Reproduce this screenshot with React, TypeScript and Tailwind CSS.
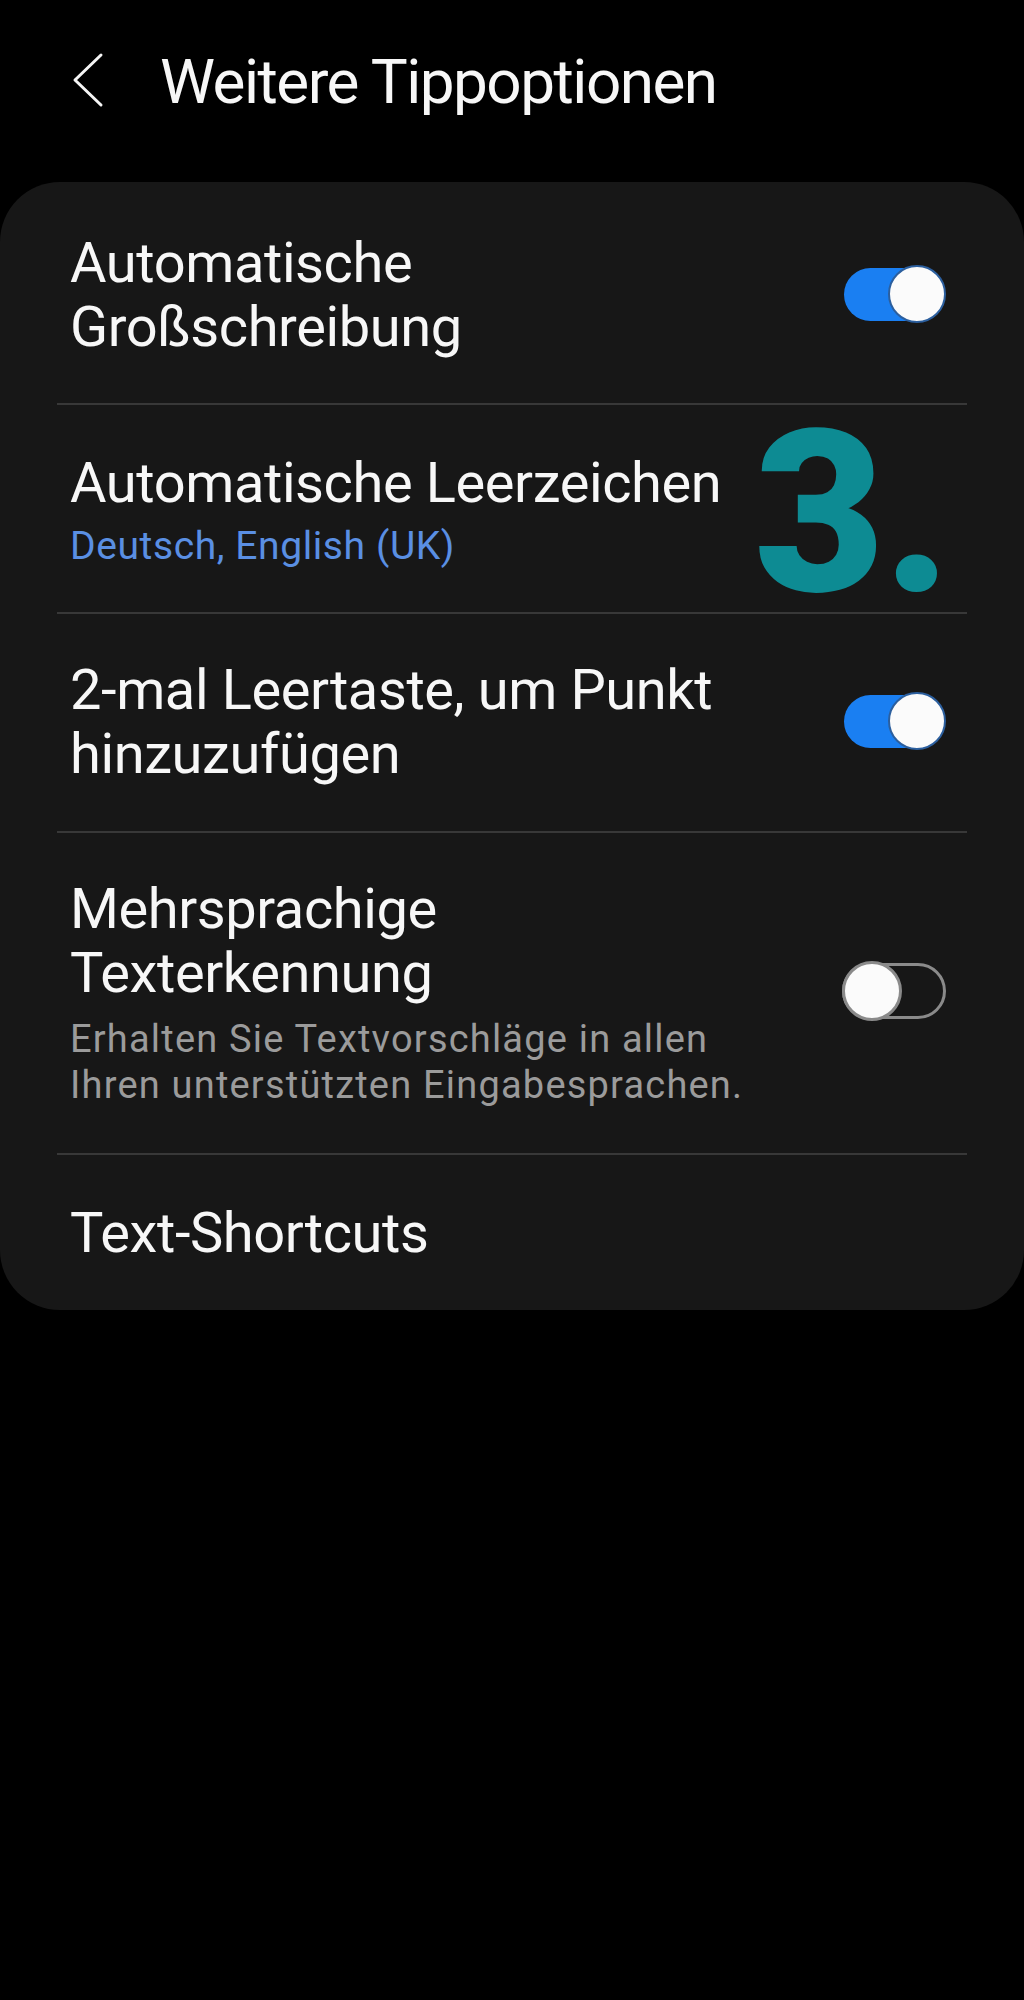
import React from 'react';

type Row = {
  id: string;
  title: string;
  subtitle?: string;
  description?: string;
  toggle?: boolean;
  pad: string;
};

const rows: Row[] = [
  { id: 'caps', title: 'Automatische Großschreibung', toggle: true, pad: 'pt-[49px] pb-[44px]' },
  { id: 'spaces', title: 'Automatische Leerzeichen', subtitle: 'Deutsch, English (UK)', pad: 'pt-[46px] pb-[43px]' },
  { id: 'period', title: '2-mal Leertaste, um Punkt hinzuzufügen', toggle: true, pad: 'pt-[44px] pb-[45px]' },
  {
    id: 'multi',
    title: 'Mehrsprachige Texterkennung',
    description: 'Erhalten Sie Textvorschläge in allen Ihren unterstützten Eingabesprachen.',
    toggle: false,
    pad: 'pt-[44px] pb-[45px]',
  },
  { id: 'shortcuts', title: 'Text-Shortcuts', pad: 'pt-[46px] pb-[45px]' },
];

function Toggle({ on }: { on: boolean }) {
  if (on) {
    return (
      <div className="relative w-[102px] h-[58px] shrink-0">
        <div className="absolute left-0 right-[3px] top-[3px] bottom-[2px] rounded-full bg-[#1a7ff2]" />
        <div className="absolute right-0 top-0 w-[58px] h-[58px] rounded-full bg-[#fbfbfb] border-2 border-[#2c5f9e]" />
      </div>
    );
  }
  return (
    <div className="relative w-[104px] h-[60px] shrink-0">
      <div className="absolute inset-x-0 top-[2px] bottom-[2px] rounded-full border-[3px] border-[#8a8a8a]" />
      <div className="absolute left-0 top-0 w-[60px] h-[60px] rounded-full bg-[#fbfbfb] border-[3px] border-[#8a8a8a]" />
    </div>
  );
}

export default function App() {
  return (
    <div className="min-h-[2000px] w-[1024px] bg-black font-['Roboto','Noto_Sans',sans-serif] text-white">
      <div className="flex items-center pl-[72px] pt-[46px] pb-[64px]">
        <svg width="32" height="56" viewBox="0 0 32 56" fill="none" className="-mt-[4px]">
          <path d="M29 3 L3 28 L29 53" stroke="#f5f5f5" strokeWidth="3" strokeLinecap="round" strokeLinejoin="round" />
        </svg>
        <h1 className="ml-[56px] text-[62px] leading-[72px] font-normal tracking-[-1.5px] text-[#f7f7f7]">
          Weitere Tippoptionen
        </h1>
      </div>

      <div className="bg-[#171717] rounded-[60px] overflow-hidden">
        {rows.map((row, i) => (
          <div key={row.id}>
            {i > 0 && <div className="mx-[57px] h-[2px] bg-[#383838]" />}
            <div className={`relative flex items-center pl-[70px] pr-[78px] ${row.pad}`}>
              <div className="w-[700px]">
                <div className="text-[56px] leading-[64px] tracking-[-0.4px] text-[#f7f7f7]">{row.title}</div>
                {row.subtitle && (
                  <div className="mt-[8px] text-[39px] leading-[46px] tracking-[0.6px] text-[#5a8fe3]">
                    {row.subtitle}
                  </div>
                )}
                {row.description && (
                  <div className="mt-[11px] w-[690px] text-[38px] leading-[46px] tracking-[1.2px] text-[#9b9b9b]">
                    {row.description}
                  </div>
                )}
              </div>
              {row.toggle !== undefined && (
                <div className="ml-auto -mt-[3px]">
                  <Toggle on={row.toggle} />
                </div>
              )}
              {row.id === 'spaces' && (
                <div className="absolute left-[754px] -top-[4px] text-[226px] leading-none font-black text-[#0d8b93] tracking-[-2px]">
                  3.
                </div>
              )}
            </div>
          </div>
        ))}
      </div>
    </div>
  );
}
